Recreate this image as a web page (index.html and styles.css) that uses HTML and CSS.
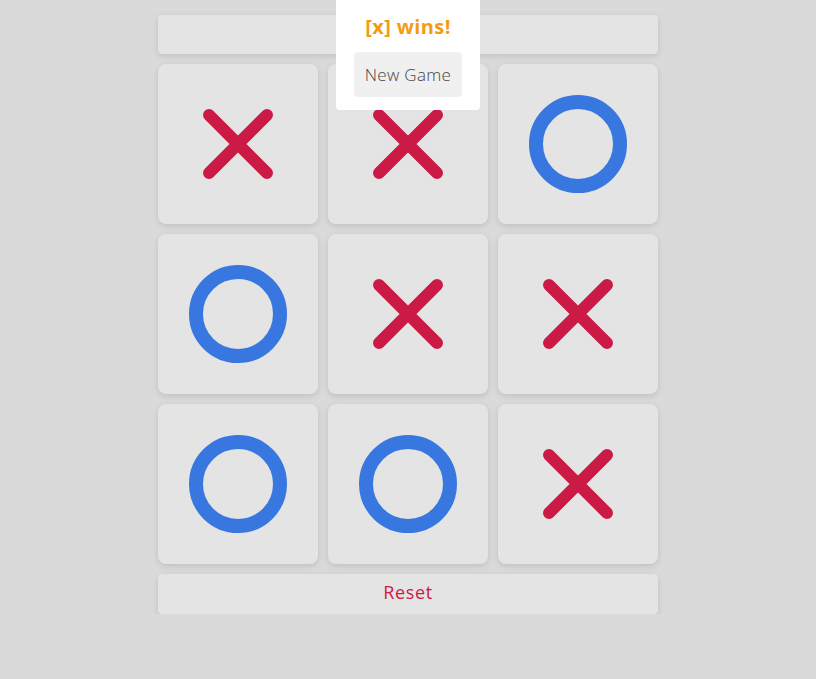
FILE: index.html
```html
<!DOCTYPE html>
<html>
<head>
<meta charset="utf-8">
<link rel="stylesheet" href="styles.css">
</head>
<body>
<div class="game">
  <div class="status"></div>
  <div class="board">
    <div class="cell"><svg viewBox="0 0 70 70"><path class="x" d="M6 6 L64 64 M64 6 L6 64"/></svg></div>
    <div class="cell"><svg viewBox="0 0 70 70"><path class="x" d="M6 6 L64 64 M64 6 L6 64"/></svg></div>
    <div class="cell"><svg viewBox="0 0 98 98"><circle class="o" cx="49" cy="49" r="42"/></svg></div>
    <div class="cell"><svg viewBox="0 0 98 98"><circle class="o" cx="49" cy="49" r="42"/></svg></div>
    <div class="cell"><svg viewBox="0 0 70 70"><path class="x" d="M6 6 L64 64 M64 6 L6 64"/></svg></div>
    <div class="cell"><svg viewBox="0 0 70 70"><path class="x" d="M6 6 L64 64 M64 6 L6 64"/></svg></div>
    <div class="cell"><svg viewBox="0 0 98 98"><circle class="o" cx="49" cy="49" r="42"/></svg></div>
    <div class="cell"><svg viewBox="0 0 98 98"><circle class="o" cx="49" cy="49" r="42"/></svg></div>
    <div class="cell"><svg viewBox="0 0 70 70"><path class="x" d="M6 6 L64 64 M64 6 L6 64"/></svg></div>
  </div>
  <button class="reset">Reset</button>
  <div class="popup">
    <div class="winner">[x] wins!</div>
    <button class="newgame">New Game</button>
  </div>
</div>
</body>
</html>
```
FILE: styles.css
```css
html, body {
  margin: 0;
  padding: 0;
  background: #dadada;
  font-family: "Open Sans", "Noto Sans", sans-serif;
}
.game {
  position: relative;
  width: 500px;
  margin: 15px auto 0;
  display: flex;
  flex-direction: column;
  gap: 10px;
}
.status {
  height: 39px;
  background: #e4e4e4;
  border-radius: 4px;
  box-shadow: 0 2px 6px rgba(0,0,0,0.12);
}
.board {
  display: grid;
  grid-template-columns: repeat(3, 160px);
  grid-auto-rows: 160px;
  gap: 10px;
}
.cell {
  background: #e4e4e4;
  border-radius: 8px;
  box-shadow: 0 2px 6px rgba(0,0,0,0.12);
  display: flex;
  align-items: center;
  justify-content: center;
}
.cell svg { display: block; }
.cell svg[viewBox="0 0 70 70"] { width: 70px; height: 70px; }
.cell svg[viewBox="0 0 98 98"] { width: 98px; height: 98px; }
.x {
  stroke: #cb1a45;
  stroke-width: 12;
  stroke-linecap: round;
  fill: none;
}
.o {
  stroke: #3877e0;
  stroke-width: 14;
  fill: none;
}
.reset {
  height: 40px;
  border: none;
  background: #e4e4e4;
  border-radius: 4px;
  box-shadow: 0 2px 6px rgba(0,0,0,0.12);
  color: #cb1a45;
  font-family: "Open Sans", "Noto Sans", sans-serif;
  font-size: 18px;
  letter-spacing: 0.6px;
  line-height: 36px;
  font-weight: 500;
  padding: 0 0 4px;
}
.popup {
  position: absolute;
  left: 178px;
  top: -15px;
  width: 144px;
  height: 110px;
  background: #fff;
  border-radius: 0 0 4px 4px;
  box-sizing: border-box;
  padding-top: 14px;
  display: flex;
  flex-direction: column;
  align-items: center;
}
.winner {
  color: #f39c12;
  font-weight: 700;
  font-size: 20px;
  letter-spacing: 0.4px;
  line-height: 26px;
}
.newgame {
  margin-top: 12px;
  width: 108px;
  height: 45px;
  border: none;
  border-radius: 4px;
  background: #f0f0f0;
  color: #444;
  font-family: "Open Sans", "Noto Sans", sans-serif;
  font-size: 17px;
  letter-spacing: 0.3px;
  font-weight: 300;
  padding: 0;
}
```
